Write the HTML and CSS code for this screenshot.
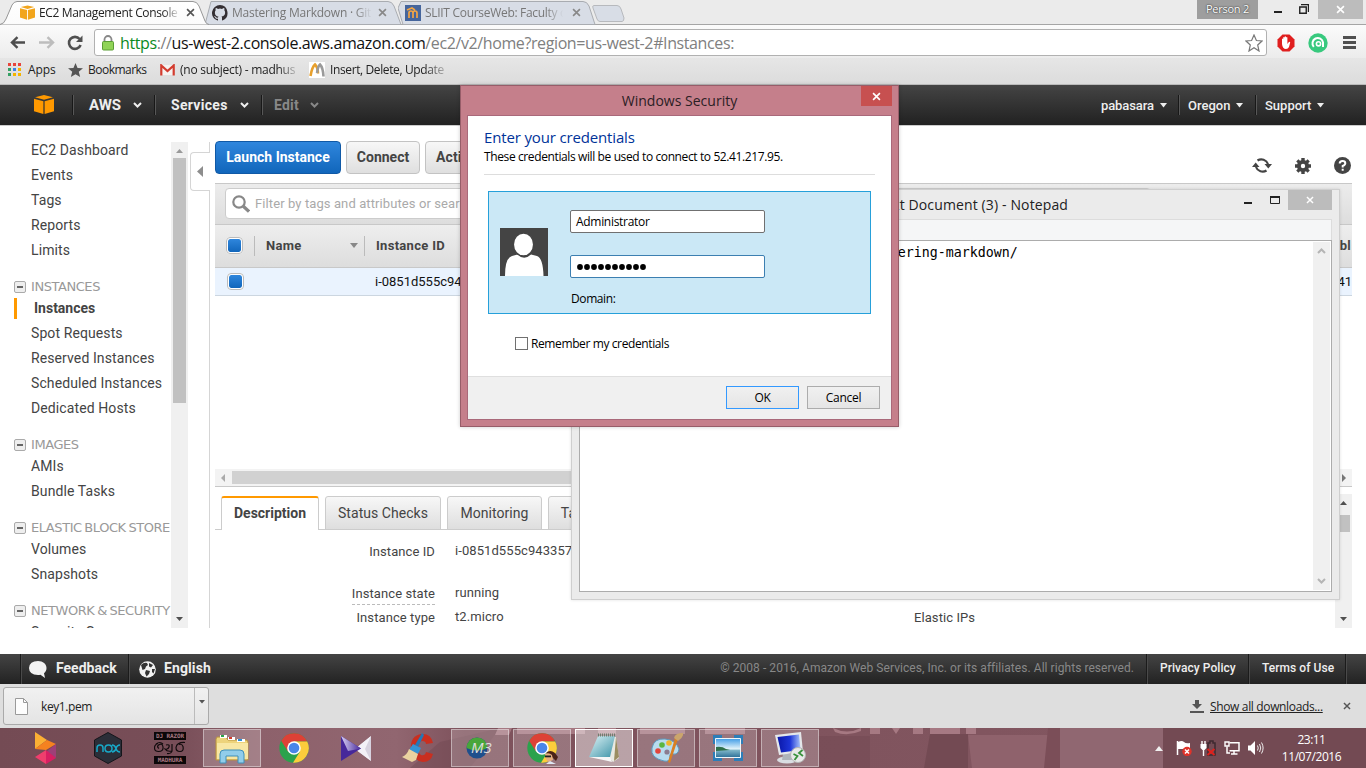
FILE: index.html
```html
<!DOCTYPE html>
<html lang="en">
<head>
<meta charset="utf-8">
<title>EC2 Management Console</title>
<link rel="stylesheet" href="styles.css">
</head>
<body>
<svg class="defs" width="0" height="0">
  <defs>
    <linearGradient id="gTab" x2="0" y2="1"><stop offset="0" stop-color="#fff"/><stop offset="1" stop-color="#fbfbfb"/></linearGradient>
    <linearGradient id="gPurple"><stop offset="0" stop-color="#d9d2f4"/><stop offset="1" stop-color="#46289a"/></linearGradient>
    <linearGradient id="gGlass" x2="1" y2="1"><stop offset="0" stop-color="#dff3f6"/><stop offset="1" stop-color="#3d94a8"/></linearGradient>
    <linearGradient id="gSky" x2="0" y2="1"><stop offset="0" stop-color="#3f9be6"/><stop offset=".55" stop-color="#e4f4fa"/><stop offset=".62" stop-color="#7fb5c8"/><stop offset="1" stop-color="#2c6f98"/></linearGradient>
    <linearGradient id="gScreen" x2="1" y2="0"><stop offset="0" stop-color="#0a17a8"/><stop offset=".55" stop-color="#1d35d8"/><stop offset="1" stop-color="#a9c4fa"/></linearGradient>
    <symbol id="cube" viewBox="0 0 20 19"><path d="M10 0 19 2.3 10 4.8 1 2.3zM0 3.8 9.4 6.3V19L0 16.2zM20 3.8 10.6 6.3V19L20 16.2z"/></symbol>
    <symbol id="chev" viewBox="0 0 9 6"><path d="M1 1 4.5 4.5 8 1" fill="none" stroke="currentColor" stroke-width="2"/></symbol>
    <symbol id="x" viewBox="0 0 10 10"><path d="M1.2 1.2 8.8 8.8M8.8 1.2 1.2 8.8" fill="none" stroke="currentColor" stroke-width="1.8"/></symbol>
    <symbol id="chrome" viewBox="0 0 30 30"><circle cx="15" cy="15" r="14.7" fill="#2ba24c"/><path d="M2.2 7.7A14.7 14.7 0 0 1 28.2 8.5H15L8.800 18.3z" fill="#dd4136"/><path d="M28.2 8.5A14.7 14.7 0 0 1 14 29.7L21 18.5 15 8.5z" fill="#fccd3c"/><circle cx="15" cy="15" r="6.8" fill="#fff"/><circle cx="15" cy="15" r="5.3" fill="#4a86e8"/></symbol>
  </defs>
</svg>

<div class="tabstrip">
  <div class="tab tab-active">
    <svg class="shape" width="209" height="25"><path d="M0 24.5Q4 24 6 19L12 5Q14 1.5 17 1.5H193Q197 1.5 199 6L205 21Q206.500 24.500 209 24.500V25H0z" fill="url(#gTab)" stroke="#979797"/></svg>
    <svg class="fav" width="15" height="15" fill="#f2a51c"><use href="#cube"/></svg>
    <span class="tab-title">EC2 Management Console</span>
    <svg class="tx dark" width="9" height="9"><use href="#x"/></svg>
  </div>
  <div class="tab tab-two">
    <svg class="shape" width="202" height="25"><path d="M6 1.500H183Q187 1.500 189 6L196 24.500H0z" fill="#d8dde6" stroke="#a9acb1"/></svg>
    <svg class="fav" width="16" height="16" viewBox="0 0 16 16"><path d="M8 0a8 8 0 0 0-2.500 15.600c.4 0 .5-.2.5-.4v-1.500c-2.200.5-2.700-1-2.700-1-.4-.9-.9-1.200-.9-1.200-.7-.5.1-.5.1-.5.800.1 1.200.8 1.200.8.700 1.300 1.900.9 2.300.7.100-.5.300-.9.500-1.100-1.800-.2-3.600-.9-3.600-4 0-.9.300-1.600.8-2.200-.1-.2-.4-1 .1-2.100 0 0 .7-.2 2.200.8a7.500 7.500 0 0 1 4 0c1.500-1 2.200-.8 2.200-.8.400 1.100.2 1.900.1 2.100.5.600.8 1.300.8 2.200 0 3.100-1.900 3.700-3.600 3.900.3.300.5.800.5 1.500v2.200c0 .2.100.5.500.4A8 8 0 0 0 8 0z" fill="#342f33"/></svg>
    <span class="tab-title">Mastering Markdown · Git</span>
    <svg class="tx" width="9" height="9"><use href="#x"/></svg>
  </div>
  <div class="tab tab-three">
    <svg class="shape" width="201" height="25"><path d="M3 1.500H185Q189 1.500 191 6L197 24.500H5L0 8z" fill="#d8dde6" stroke="#a9acb1"/></svg>
    <svg class="fav" width="16" height="16"><path d="M0 0h16v16H0z" fill="#45659c"/><path d="M4 13V8q0-2 2-2t2 2v5m0-5q0-2 2-2t2 2v5M2 5l5-2 3 2" stroke="#f2a443" stroke-width="1.700" fill="none"/></svg>
    <span class="tab-title">SLIIT CourseWeb: Faculty o</span>
    <svg class="tx" width="9" height="9"><use href="#x"/></svg>
  </div>
  <svg class="newtab" width="33" height="17"><path d="M2 .5H25Q28 .5 29 4L32 13Q32 16.500 30 16.500H8Q6 16.500 5 14L1 3Q0 .5 2 .5z" fill="#d8dde6" stroke="#b7b9bd"/></svg>
  <div class="winctl">
    <span class="person">Person 2</span>
    <svg class="wmin" width="8" height="2"><path d="M0 0h8v2H0z" fill="#222"/></svg>
    <svg class="wmax" width="10" height="10"><path d="M.75 3h6.500v6.200H.75z" fill="none" stroke="#222" stroke-width="1.400"/><path d="M2 .6h7.400V8" fill="none" stroke="#222" stroke-width="1.200"/></svg>
    <span class="wclose"><svg width="9" height="9"><use href="#x"/></svg></span>
  </div>
</div>

<div class="navbar">
  <svg class="nb-back" width="16" height="13" viewBox="0 0 16 13"><path d="M15 6.500H2.500M7.500 1.200 2 6.500l5.500 5.300" fill="none" stroke="#4e4e4e" stroke-width="2.400"/></svg>
  <svg class="nb-fwd" width="16" height="13" viewBox="0 0 16 13"><path d="M0 6.500h13.500M8.500 1.200 14 6.500l-5.500 5.300" fill="none" stroke="#bdbdbd" stroke-width="2.400"/></svg>
  <svg class="nb-rel" width="16" height="16" viewBox="0 0 16 16"><path d="M12.600 4A6 6 0 1 0 13.600 10" fill="none" stroke="#505050" stroke-width="2.600"/><path d="M15.500.5V7H9z" fill="#505050"/></svg>
  <div class="omnibox">
    <svg width="12" height="16" viewBox="0 0 12 16"><path d="M2.500 8V4.500a3.500 3.500 0 0 1 7 0V8" fill="none" stroke="#888" stroke-width="1.800"/><rect x=".5" y="6.500" width="11" height="8.500" rx="1" fill="#90d357" stroke="#5b9e35"/></svg>
    <span class="url"><i>https</i>://<b>us-west-2.console.aws.amazon.com</b>/ec2/v2/home?region=us-west-2#Instances:</span>
    <svg class="star" width="18" height="18" viewBox="0 0 18 18"><path d="M9 1 11.400 6.500 17 7 12.700 11 14 17 9 13.800 4 17 5.300 11 1 7 6.600 6.500z" fill="#fff" stroke="#777" stroke-width="1.200"/></svg>
  </div>
  <svg class="ext" width="18" height="18" viewBox="0 0 18 18"><path d="M5.500.5h7L17.500 5.500v7l-5 5h-7l-5-5v-7z" fill="#e01f1f"/><path d="M5 10V5q.6-1 1.200 0V8 3.500q.7-1 1.400 0V7.500 2.700q.7-1 1.400 0V7.500 3.500q.7-1 1.400 0V10l1.500-2q1-.5 1.300.2L12 13Q11 15 9 15 5.500 15 5 10z" fill="#fff"/></svg>
  <svg class="ext2" width="20" height="20" viewBox="0 0 20 20"><circle cx="10" cy="10" r="9.700" fill="#38c97e"/><path d="M5.800 13.800A5.300 5.300 0 1 1 15 9.500V14" fill="none" stroke="#fff" stroke-width="2"/><circle cx="10.500" cy="10.800" r="2.100" fill="none" stroke="#fff" stroke-width="1.600"/></svg>
  <svg class="burger" width="13" height="13"><path d="M0 1.500h13M0 6.500h13M0 11.500h13" stroke="#505050" stroke-width="2.800"/></svg>
</div>

<div class="bookmarks">
  <svg class="apps" width="13" height="13"><path d="M0 0h3v3H0zM5 0h3v3H5zM10 0h3v3h-3z" fill="#e8453c"/><path d="M0 5h3v3H0z" fill="#34a064"/><path d="M5 5h3v3H5z" fill="#3b82e8"/><path d="M10 5h3v3h-3z" fill="#f4b400"/><path d="M0 10h3v3H0z" fill="#34a064"/><path d="M5 10h3v3H5zM10 10h3v3h-3z" fill="#f4b400"/></svg>
  <span class="bm-a">Apps</span>
  <svg class="bmi" width="15" height="14" viewBox="0 0 16 15"><path d="M8 0 10.200 5.300 16 5.700 11.500 9.500 13 15 8 12 3 15 4.500 9.500 0 5.700 5.800 5.300z" fill="#555"/></svg>
  <span class="bm-b">Bookmarks</span>
  <svg class="bmi" width="15" height="12" viewBox="0 0 15 12"><path d="M2 1h11v10H2z" fill="#f6f2f0"/><path d="M1.300 11.500V1.500L7.500 7l6.200-5.500v10" fill="none" stroke="#d33c2f" stroke-width="2.200"/></svg>
  <span class="bm-c">(no subject) - madhus</span>
  <svg class="bmi" width="16" height="16"><path d="M0 0h16v16H0z" fill="#fff"/><path d="M1.500 14Q3 5 6 2.500q3 3 3 9" fill="none" stroke="#e8a02c" stroke-width="2.600"/><path d="M8 11Q9 4 11 2.500q3 3 3.500 12" fill="none" stroke="#9a9a9a" stroke-width="2.600"/></svg>
  <span class="bm-d">Insert, Delete, Update</span>
</div>

<div class="awsbar">
  <svg class="logo" width="20" height="19" fill="#f90"><use href="#cube"/></svg>
  <span class="aws-item i-aws"><span>AWS</span><svg width="9" height="6"><use href="#chev"/></svg></span>
  <span class="aws-item i-serv"><span>Services</span><svg width="9" height="6"><use href="#chev"/></svg></span>
  <span class="aws-item i-edit"><span>Edit</span><svg width="9" height="6"><use href="#chev"/></svg></span>
  <span class="aws-right">
    <span class="acct a1"><span>pabasara</span><svg width="7" height="5"><path d="M0 0h7L3.500 4.500z"/></svg></span>
    <span class="acct a2"><span>Oregon</span><svg width="7" height="5"><path d="M0 0h7L3.500 4.500z"/></svg></span>
    <span class="acct a3"><span>Support</span><svg width="7" height="5"><path d="M0 0h7L3.500 4.500z"/></svg></span>
  </span>
</div>

<div class="work">
  <nav class="side">
    <a>EC2 Dashboard</a><a>Events</a><a>Tags</a><a>Reports</a><a>Limits</a>
    <h4><i></i><span>INSTANCES</span></h4>
    <a class="cur">Instances</a><a>Spot Requests</a><a>Reserved Instances</a><a>Scheduled Instances</a><a>Dedicated Hosts</a>
    <h4><i></i><span>IMAGES</span></h4>
    <a>AMIs</a><a>Bundle Tasks</a>
    <h4><i></i><span>ELASTIC BLOCK STORE</span></h4>
    <a>Volumes</a><a>Snapshots</a>
    <h4><i></i><span>NETWORK &amp; SECURITY</span></h4>
    <a>Security Groups</a>
  </nav>
  <div class="vscroll"><svg width="7" height="4"><path d="M0 4h7L3.500 0z" fill="#999"/></svg><div class="vthumb"></div><svg width="7" height="4"><path d="M0 0h7L3.500 4z" fill="#505050"/></svg></div>
  <div class="split"><div class="handle"><svg width="6" height="11"><path d="M6 0v11L0 5.500z" fill="#8d8d8d"/></svg></div></div>
  <main class="main">
    <div class="actions">
      <span class="btn primary">Launch Instance</span><span class="btn b-con">Connect</span><span class="btn b-act">Actions</span>
      <span class="tools">
        <svg width="20" height="17" viewBox="0 0 20 17"><path d="M5.500 3.500A7 7 0 0 1 16 7M14.500 13.500A7 7 0 0 1 4 10" fill="none" stroke="#444" stroke-width="2.200"/><path d="M12.500 7H20l-3.700 4.500zM0 10h7.500L3.700 5.500z" fill="#444"/></svg>
        <svg width="16" height="16" viewBox="0 0 16 16"><path d="M6.300 0h3.400v2.200l1.300.5 1.600-1.500 2.200 2.200L13.300 5l.5 1.300H16v3.400h-2.200l-.5 1.300 1.500 1.600-2.200 2.200-1.600-1.500-1.300.5V16H6.300v-2.200L5 13.300l-1.600 1.500-2.200-2.200L2.700 11l-.5-1.300H0V6.300h2.200L2.700 5 1.200 3.400l2.200-2.200L5 2.700l1.300-.5zM8 5.800a2.200 2.200 0 1 0 0 4.400 2.200 2.200 0 0 0 0-4.400z" fill="#444"/></svg>
        <svg width="17" height="17" viewBox="0 0 17 17"><circle cx="8.500" cy="8.500" r="8.500" fill="#444"/><path d="M5.700 6.500Q5.700 4 8.500 4t2.800 2.300Q11.300 8 8.700 9v1.500M8.700 11.700v2" fill="none" stroke="#fff" stroke-width="2"/></svg>
      </span>
    </div>
    <div class="filter"><div class="search"><svg width="18" height="18" viewBox="0 0 18 18"><circle cx="7" cy="7" r="5.700" fill="none" stroke="#888" stroke-width="2.200"/><path d="M11 11l6 5.500" stroke="#888" stroke-width="3.200"/></svg><span>Filter by tags and attributes or search by keyword</span></div></div>
    <div class="thead"><i class="ck"></i><span class="th1"><span>Name</span><svg width="8" height="5"><path d="M0 0h8L4 5z" fill="#888"/></svg></span><span class="th2"><span>Instance ID</span></span><span class="thr">bl</span></div>
    <div class="trow"><i class="ck"></i><span class="iid">i-0851d555c943357</span><span class="tdr">41</span></div>
    <div class="blank"></div>
    <div class="hscroll"><svg width="5" height="8"><path d="M4 0v8L0 4z" fill="#aaa"/></svg><div class="hthumb"></div><svg width="5" height="8"><path d="M0 0v8l4-4z" fill="#777"/></svg></div>
    <div class="detail">
      <div class="dleft">
        <div class="dtabs"><span class="on">Description</span><span class="d2">Status Checks</span><span class="d3">Monitoring</span><span class="d4">Tags</span></div>
        <div class="kv"><span class="k">Instance ID</span><span class="v">i-0851d555c943357</span><span></span></div>
        <div class="kv kv2"><span class="k"><u>Instance state</u></span><span class="v">running</span><span></span></div>
        <div class="kv kv3"><span class="k">Instance type</span><span class="v">t2.micro</span><span class="eip">Elastic IPs</span></div>
      </div>
      <div class="vscroll vs2"><svg width="7" height="4"><path d="M0 4h7L3.500 0z" fill="#505050"/></svg><div class="vthumb"></div><svg width="7" height="4"><path d="M0 0h7L3.500 4z" fill="#505050"/></svg></div>
    </div>
  </main>
</div>

<footer class="foot">
  <span class="f1"><svg width="18" height="17" viewBox="0 0 18 17"><path d="M9 0C14 0 17.500 3 17.500 7c0 2.500-1 4-2.500 5.200L16 17l-4.500-3.200Q10 14 9 14 0 13.500 0 7 .5 0 9 0z" fill="#f2f2f2"/></svg><span>Feedback</span></span>
  <span class="f2"><svg width="17" height="17" viewBox="0 0 17 17"><circle cx="8.500" cy="8.500" r="8.300" fill="#f2f2f2"/><path d="M2 4Q5 1 8 2L9 4 7 5.500 6 8 3.500 9zM10 2l4 2-2 2.500-2-1zM7 9l4 1-1 3-2.500 2.500L6 12zM13 8l3 0-1.500 4.500L13 11z" fill="#333"/></svg><span>English</span></span>
  <span class="copy">© 2008 - 2016, Amazon Web Services, Inc. or its affiliates. All rights reserved.</span>
  <span class="f3">Privacy Policy</span><span class="f4">Terms of Use</span><span class="f5"></span>
</footer>

<div class="dl">
  <div class="dlitem"><svg width="13" height="17"><path d="M.5.500h8l4 4v12H.5z" fill="#fdfdfd" stroke="#9a9a9a"/><path d="M8.500.500v4h4" fill="none" stroke="#9a9a9a"/></svg><span class="fn">key1.pem</span><span class="dd"><svg width="6" height="4"><path d="M0 0h6L3 3.500z" fill="#555"/></svg></span></div>
  <svg class="dlarrow" width="14" height="13"><path d="M5 0h4v4h3L7 9 2 4h3zM0 11h14v2H0z" fill="#555"/></svg>
  <span class="all">Show all downloads...</span>
  <svg class="dlx" width="8" height="8"><use href="#x"/></svg>
</div>

<div class="taskbar">
  <svg class="wall" width="1366" height="40"><defs><linearGradient id="gw"><stop offset="0" stop-color="#744b54"/><stop offset=".13" stop-color="#784e58"/><stop offset=".19" stop-color="#8d616b"/><stop offset=".29" stop-color="#916670"/><stop offset=".34" stop-color="#7e525c"/><stop offset=".62" stop-color="#80545e"/><stop offset="1" stop-color="#845862"/></linearGradient></defs>
    <path d="M0 0h1366v40H0z" fill="url(#gw)"/>
    <path d="M818 8h52v32h-52zM440 14l60-14-30 40h-60z" fill="#6f4650" opacity=".4"/><path d="M930 6h38v34h-44z" fill="#734a53"/>
    <g fill="#b3858f" opacity=".75"><path d="M498 0h14l-3 7h-14zM517 0h68v6h-68zM598 0h18v6h-18zM640 0h45v6h-45zM705 0h40v6h-40zM833 0q14 7 28 0v3q-14 6-26 1zM870 0h10v6h-10zM892 0h8l-4 6zM913 0h10v6h-10zM930 0h30v6h-30zM966 0h10v6h-10z"/></g>
    <path d="M968 7h80v33h-76z" fill="#8f626c"/><path d="M1048 0h12v40h-16z" fill="#7b4e58"/><path d="M1060 0h103v40h-103z" fill="#906771"/><path d="M1163 0h203v40h-203z" fill="#734a53"/></svg>
  <span class="tk"><svg width="24" height="32" viewBox="0 0 24 32"><path d="M1 0 13 8 1 17z" fill="#fbb034"/><path d="M13 8 22 12 12 18 1 17z" fill="#f58220"/><path d="M22 12V26L12 20z" fill="#9e3f78"/><path d="M12 18 22 26 12 32z" fill="#d81f62"/><path d="M1 25 12 18V32z" fill="#ef3e6d"/></svg></span>
  <span class="tk"><svg width="28" height="32" viewBox="0 0 28 32"><path d="M14 .5 27.500 8v16L14 31.500.5 24V8z" fill="#2b2e38" stroke="#15161b"/><path d="M3 20v-4q0-3 3-3t3 3v4M11 16.500q0-3.500 3.500-3.500t3.500 3.500-3.500 3.500-3.500-3.500zM18 13q3 0 4 3.500t4 3.500M26 13q-3 0-4 3.500T18 20" fill="none" stroke="#18a9c8" stroke-width="1.500"/></svg></span>
  <span class="tk dj"><b>DJ RAZOR</b><svg width="32" height="14" viewBox="0 0 32 14"><path d="M4 2.500q-3.500 1-3.500 4.500t4 3.500q5 0 4.500-4.500T4.500 4q-2 2 .5 3.500M2 3q4-3 7 0M12 4q4-1 3 2t-4 2q2 3 7 2V3M18 9q0 4-5 3.500M31 1.500q-8-.5-9 5 0 4 4 4t3-5q-1-3-4-2" fill="none" stroke="#120b0d" stroke-width="1.200"/></svg><b>MADHURA</b></span>
  <span class="tk open"><svg width="34" height="31" viewBox="0 0 34 31"><path d="M2 4h9l2 3h18q2 0 2 2v18H1V6z" fill="#edd37b" stroke="#b8923f"/><path d="M5 2h7v3H5zM13 4h7v3h-7zM22 6h8v3h-8z" fill="#fff"/><path d="M6 2h3v2H6z" fill="#2aa34a"/><path d="M14 4h3v2h-3z" fill="#d43b2c"/><path d="M23 6h4v2h-4z" fill="#2c8fd8"/><path d="M2 10h31v16H2z" fill="#f8e7a4"/><path d="M5 30V21q0-4 4-4h16q4 0 4 4v9h-6v-7H11v7z" fill="#91cdea" stroke="#3f8fb8"/></svg></span>
  <span class="tk"><svg width="30" height="30"><use href="#chrome"/></svg></span>
  <span class="tk"><svg width="32" height="27" viewBox="0 0 32 27"><path d="M31 1v25L15 14z" fill="#d7d2df"/><path d="M31 1 15 14 31 26 25 14z" fill="#f3f1f7"/><path d="M1 1 21 13.500 1 26z" fill="#46289a"/><path d="M1 1 21 13.500 8 16z" fill="url(#gPurple)"/></svg></span>
  <span class="tk"><svg width="32" height="32" viewBox="0 0 32 32"><path d="M31 11Q29 1 19 2 8 4 9 17q2 12 12 13 8 0 10-8l-7-2q-1 4-5 3-3-2-3-8 1-6 4-6 4 0 4 3z" fill="#c92f20"/><path d="M20 1l2 2-6 12-3-2z" fill="#2478b6"/><path d="M11 12l8 4-3 6-9-4z" fill="#3493d4"/><path d="M7 17l9 5-2 6-4 2-10-5q5-2 7-8z" fill="#ead2a0"/></svg></span>
  <span class="tk open m3"><svg width="22" height="22" viewBox="0 0 22 22"><circle cx="11" cy="11" r="10.500" fill="#1f4f8c"/><path d="M.5 11a10.500 10.500 0 0 1 21 0q-10 5-21 0z" fill="#48a63a"/></svg><b>M3</b></span>
  <span class="tk open"><svg width="30" height="30"><use href="#chrome"/></svg><svg class="badge" width="14" height="14" viewBox="0 0 14 14"><path d="M2 3Q6-1 11 3L14 7 12 11 9 8z" fill="#4a2218"/><path d="M1 4q4-2 7 1l1 5-5 2-2-3z" fill="#e6ae80"/><path d="M1 5.500h6v1.800H1z" fill="#222"/><path d="M2 14l4-3 6 3z" fill="#dfe6f2"/></svg></span>
  <span class="tk open focus"><svg width="32" height="30" viewBox="0 0 32 30"><path d="M11 3 28 4 31 25 25 29 22 26z" fill="#e9e9e2"/><path d="M28 4l3 20-5 4z" fill="#9b8d62"/><path d="M10 3h17l-5 21H1z" fill="url(#gGlass)"/><path d="M1 24h21l2 5-4-1z" fill="#f6f6f6"/><path d="M10 2h18" stroke="#6e7d6e" stroke-width="3" stroke-dasharray="1 1"/></svg></span>
  <span class="tk open"><svg width="33" height="32" viewBox="0 0 33 32"><path d="M2 16Q4 6 15 7t14 10q-1 6-6 5-4-1-3 3 0 5-6 4Q0 26 2 16z" fill="#b8dcee" stroke="#5d9bbf"/><circle cx="8" cy="19" r="2.800" fill="#e2463c"/><circle cx="12" cy="13" r="2.800" fill="#5ab640"/><circle cx="19" cy="11" r="2.800" fill="#f1b52c"/><circle cx="17" cy="20" r="2.600" fill="#8a7d8f"/><path d="M28 7 20 31l-2-1 7-24z" fill="#d98024"/><path d="M24 6Q25 1 33 1q1 4-5 8z" fill="#cba56c"/></svg></span>
  <span class="tk open"><svg width="30" height="26" viewBox="0 0 30 26"><path d="M0 0h9v4H4v5H0zM21 0h9v9h-4V4h-5zM0 17h4v5h5v4H0zM26 17h4v9h-9v-4h5z" fill="#2d7db8"/><path d="M2.500 3.500h25v19h-25z" fill="url(#gSky)" stroke="#eef6fa"/><path d="M3 12q6-1 10 2l4 1-14 1z" fill="#2f6f4a"/></svg></span>
  <span class="tk open"><svg width="32" height="32" viewBox="0 0 32 32"><ellipse cx="13" cy="28" rx="10" ry="3.500" fill="#d9dde2"/><path d="M9 22h8l1 6H8z" fill="#aeb4bb"/><path d="M1 3 27 0 29 20 5 23z" fill="#e4e7ea"/><path d="M3.500 5 25 2.500 26.500 18 7 20.500z" fill="url(#gScreen)"/><circle cx="24" cy="23" r="7.500" fill="#e8e8e8" stroke="#b5b5b5"/><path d="M19.500 22l4 2-3 4M28.500 18l-3.500 3 4 3" fill="none" stroke="#38913b" stroke-width="1.800"/></svg></span>
  <div class="tray">
    <svg class="up" width="8" height="5"><path d="M0 5h8L4 0z" fill="#f0f0f0"/></svg>
    <svg width="16" height="16" viewBox="0 0 16 16"><path d="M1.500 1v14" stroke="#fff" stroke-width="1.500"/><path d="M2 2q4-2 6 0t6 1v6H2z" fill="#fff"/><circle cx="11" cy="11.500" r="4.700" fill="#e0332a"/><path d="M9 9.500l4 4m0-4-4 4" stroke="#fff" stroke-width="1.500"/></svg>
    <svg width="16" height="16" viewBox="0 0 16 16"><path d="M2 1v4M5 1v4M3.500 9v7" stroke="#fff" stroke-width="1.400"/><path d="M.5 4h6v4l-2 2h-2L.5 8z" fill="#fff"/><path d="M8 15V3h2V1h3v2h2v12z" fill="none" stroke="#3f2a30" stroke-width="1.500"/><path d="M7.500 9l7 6m0-6-7 6" stroke="#e0201c" stroke-width="2"/></svg>
    <svg width="16" height="14" viewBox="0 0 16 14"><path d="M5.500 1.800h9.500v8H5.500M10 10v3M7 13h6.500M3 5.500V12h3" fill="none" stroke="#fff" stroke-width="1.500"/><path d="M1 1h4v4H1z" fill="none" stroke="#fff" stroke-width="1.400"/></svg>
    <svg width="16" height="14" viewBox="0 0 16 14"><path d="M0 4.500h2.500L7 0v14L2.500 9.500H0z" fill="#fff"/><path d="M9.500 4.500q1.500 2.500 0 5M11.500 3q2.500 4 0 8M13.500 1.500q3.200 5.500 0 11" fill="none" stroke="#eee"/></svg>
    <div class="clock"><span>23:11</span><span class="date">11/07/2016</span></div>
  </div>
</div>

<section class="notepad">
  <div class="np-title"><span class="np-name">New Text Document (3) - Notepad</span>
    <span class="np-ctl"><svg class="n1" width="8" height="2"><path d="M0 0h8v2H0z" fill="#222"/></svg><svg class="n2" width="10" height="8"><path d="M.5 1h9v6.500h-9z" fill="none" stroke="#222"/><path d="M0 0h10v2H0z" fill="#222"/></svg><span class="n3"><svg width="8" height="8"><use href="#x"/></svg></span></span>
  </div>
  <div class="np-menu"></div>
  <div class="np-area"><span class="np-text">https://guides.github.com/features/mastering-markdown/</span>
    <div class="np-scroll"><svg width="9" height="6"><path d="M1 5l3.500-3.500L8 5" fill="none" stroke="#b5b5b5" stroke-width="2"/></svg><svg width="9" height="6"><use href="#chev"/></svg></div></div>
</section>

<section class="dialog">
  <div class="dg-title"><span>Windows Security</span><i><svg width="9" height="9"><use href="#x"/></svg></i></div>
  <div class="dg-body">
    <div class="dg-main">
      <h2><span>Enter your credentials</span></h2>
      <p class="sub"><span>These credentials will be used to connect to 52.41.217.95.</span></p>
      <div class="cred">
        <svg width="48" height="48"><path d="M0 0h48v48H0z" fill="#444"/><path d="M5 48Q5 30 12 28L17.500 26.500Q24 33 31 26.500L37 28Q43 30 43.500 48z" fill="#fff"/><ellipse cx="23.500" cy="16.500" rx="10.200" ry="11.500" fill="#fff" stroke="#444" stroke-width="1.500"/></svg>
        <div class="fields"><div class="inp"><span>Administrator</span></div><div class="inp pw"><svg width="72" height="8"><g><circle cx="4" cy="4" r="2.900"/><circle cx="11" cy="4" r="2.900"/><circle cx="18" cy="4" r="2.900"/><circle cx="25" cy="4" r="2.900"/><circle cx="32" cy="4" r="2.900"/><circle cx="39" cy="4" r="2.900"/><circle cx="46" cy="4" r="2.900"/><circle cx="53" cy="4" r="2.900"/><circle cx="60" cy="4" r="2.900"/><circle cx="67" cy="4" r="2.900"/></g></svg></div><span class="dom">Domain:</span></div>
      </div>
      <label class="rem"><i></i><span>Remember my credentials</span></label>
    </div>
    <div class="dg-foot"><span class="wb ok">OK</span><span class="wb">Cancel</span></div>
  </div>
</section>
</body>
</html>
```
FILE: styles.css
```css
* { box-sizing: border-box; }
body { margin: 0; width: 1366px; height: 768px; overflow: hidden; position: relative; display: flex; flex-direction: column; background: #fff; font: 12px "Open Sans", sans-serif; white-space: nowrap; }
svg { display: block; flex: none; }
.defs { position: absolute; }
i { font-style: normal; }

.tabstrip { height: 25px; flex: none; display: flex; background: #ebebeb; border-bottom: 1px solid #a5a5a5; }
.tab { position: relative; display: flex; align-items: center; height: 25px; flex: none; color: #777; }
.shape { position: absolute; left: 0; top: 0; }
.fav { position: relative; }
.tab-active { width: 205px; padding-left: 20px; color: #222; z-index: 3; }
.tab-two { width: 193px; padding-left: 7px; z-index: 2; }
.tab-three { width: 194px; padding-left: 7px; }
.tab-title { position: relative; margin-left: 4px; width: 144px; letter-spacing: -.36px; line-height: 25px; -webkit-mask-image: linear-gradient(90deg, #000 86%, transparent 98%); }
.tab-two .tab-title { width: 143px; letter-spacing: -.22px; }
.tab-three .tab-title { letter-spacing: -.3px; -webkit-mask-image: linear-gradient(90deg, #000 84%, transparent 96%); }
.tx { position: relative; margin-left: 3px; color: #888; }
.tx.dark { color: #555; }
.newtab { margin-top: 5px; }
.winctl { margin-left: auto; display: flex; height: 19px; width: 169px; }
.person { width: 61px; background: #9e9e9e; color: #fff; font-size: 11px; line-height: 18px; text-align: center; letter-spacing: -.25px; text-shadow: 0 0 2px #333, 0 0 1px #555; }
.wmin { margin: 11px 0 0 16px; }
.wmax { margin: 4px 0 0 17px; }
.wclose { margin-left: 9px; width: 45px; background: #bcbcbc; color: #fff; display: flex; align-items: center; justify-content: center; }

.navbar { height: 33px; flex: none; display: flex; align-items: center; background: linear-gradient(#fbfbfb, #ececec); padding: 2px 0 0 10px; }
.nb-fwd { margin-left: 13px; }
.nb-rel { margin-left: 12px; }
.omnibox { margin-left: 11px; width: 1173px; height: 27px; background: #fff; border: 1px solid #b1b1b1; border-radius: 3px; display: flex; align-items: center; padding: 0 3px 0 7px; flex: none; }
.url { margin-left: 6px; font-size: 16px; letter-spacing: -.39px; color: #808080; }
.url i { color: #0b8a1e; }
.url b { font-weight: 400; color: #111; }
.star { margin-left: auto; }
.ext { margin-left: 10px; }
.ext2 { margin-left: 13px; }
.burger { margin-left: 15px; }

.bookmarks { height: 27px; flex: none; display: flex; align-items: center; background: linear-gradient(#e6e6e6, #dcdcdc); border-bottom: 1px solid #bababa; color: #222; padding: 0 0 3px 8px; }
.bm-a { margin-left: 7px; width: 40px; letter-spacing: -.1px; }
.bm-b { margin-left: 5px; width: 72px; letter-spacing: -.5px; letter-spacing: -.52px; }
.bm-c { margin-left: 5px; width: 117px; margin-right: 12px; letter-spacing: -.26px; -webkit-mask-image: linear-gradient(90deg, #000 84%, transparent 103%); }
.bm-d { margin-left: 5px; width: 118px; letter-spacing: -.38px; -webkit-mask-image: linear-gradient(90deg, #000 80%, transparent 103%); }
.bookmarks .bmi { flex: none; }

.awsbar { height: 40px; flex: none; display: flex; align-items: center; background: linear-gradient(#444, #222); padding-left: 34px; font: 700 15px Roboto, sans-serif; color: #eee; border-bottom: 1px solid #222; }
.aws-item { display: flex; align-items: center; height: 20px; border-left: 1px solid #575757; box-shadow: -1px 0 #181818; }
.i-aws { margin-left: 19px; width: 82px; padding-left: 15px; }
.i-serv { width: 107px; padding-left: 15px; font-size: 14px; letter-spacing: .3px; }
.i-edit { padding-left: 11px; color: #888; font-size: 14px; letter-spacing: .2px; }
.i-aws svg { margin-left: 12px; }
.i-serv svg { margin-left: 12px; }
.i-edit svg { margin-left: 11px; }
.aws-right { margin-left: auto; display: flex; width: 278px; font: 500 13px Roboto, sans-serif; padding-top: 1px; }
.acct { height: 20px; display: flex; align-items: center; fill: #eee; }
.acct svg { margin-left: 6px; }
.a1 { width: 91px; padding-left: 13px; letter-spacing: -.1px; }
.a2, .a3 { border-left: 1px solid #575757; box-shadow: -1px 0 #181818; padding-left: 8px; }
.a2 { width: 77px; }

.work { height: 529px; flex: none; display: flex; border-top: 1px solid #ccc; font-family: Roboto, sans-serif; color: #444; }
.side { width: 171px; height: 502px; overflow: hidden; padding-top: 12px; font-size: 14px; }
.side a { display: block; height: 25px; line-height: 25px; padding-left: 31px; letter-spacing: .1px; }
.side h4 { margin: 15px 0 0; height: 18px; display: flex; align-items: center; padding: 0 0 1px 14px; font: 13px "DejaVu Sans", sans-serif; letter-spacing: -.44px; word-spacing: -1px; color: #999; }
.side h4 i { width: 12px; height: 12px; border: 1px solid #aaa; border-radius: 2px; background: linear-gradient(#666, #666) 2px 4px/6px 2px no-repeat, #eee; margin-right: 5px; flex: none; }
.side a.cur { font-weight: 700; padding-left: 17px; margin-left: 14px; border-left: 3px solid #f90; height: 21px; line-height: 21px; margin-top: 2px; margin-bottom: 2px; letter-spacing: 0; }
.vscroll { width: 17px; margin-top: 16px; height: 486px; background: #f0f0f0; display: flex; flex-direction: column; align-items: center; padding: 7px 0 7px; flex: none; }
.vthumb { width: 13px; height: 245px; background: #c1c1c1; margin-top: 5px; }
.vscroll svg:last-child { margin-top: auto; }
.split { width: 22px; margin-top: 16px; height: 486px; background: linear-gradient(#d5d5d5, #d5d5d5) 100% 0/1px 100% no-repeat; padding: 10px 0 0 2px; }
.handle { width: 20px; height: 39px; background: #fff; border: 1px solid #d5d5d5; border-right: 0; border-radius: 4px 0 0 4px; display: flex; align-items: center; padding-left: 6px; }

.main { margin-left: 5px; width: 1137px; height: 502px; overflow: hidden; }
.actions { height: 57px; padding-top: 15px; display: flex; gap: 5px; }
.btn { height: 33px; border: 1px solid #c3c3c3; border-radius: 4px; background: linear-gradient(#f7f7f7, #dfdfdf); font: 700 14px/31px Roboto, sans-serif; text-align: center; width: 74px; }
.b-act { text-align: left; padding-left: 10px; letter-spacing: .1px; }
.primary { width: 126px; background: linear-gradient(#2f86dd, #1166bb); color: #fff; border-color: #1059a6; }
.tools { margin-left: auto; display: flex; align-items: center; gap: 23px; height: 49px; padding-right: 1px; }
.filter { height: 41px; border-top: 1px solid #c8c8c8; background: linear-gradient(#ececec, #ddd); padding: 4px 0 0 10px; }
.search { width: 926px; height: 31px; background: #fff; border: 1px solid #ccc; border-radius: 4px; display: flex; align-items: center; padding-left: 6px; font-size: 13px; color: #aaa; letter-spacing: .1px; }
.search span { margin-left: 5px; }
.thead { height: 44px; border-top: 1px solid #c8c8c8; border-bottom: 1px solid #c8c8c8; background: linear-gradient(#eee, #ddd); display: flex; align-items: center; font: 700 13px Roboto, sans-serif; padding: 0 0 1px 11px; letter-spacing: .3px; }
.ck { width: 17px; height: 17px; border: 2px solid #fff; outline: 1px solid #bbb; outline-offset: -1px; border-radius: 4px; background: linear-gradient(#2f86dd, #1166bb) padding-box; }
.th1 { margin-left: 11px; width: 110px; height: 20px; display: flex; align-items: center; justify-content: space-between; padding: 0 6px 0 11px; border-left: 1px solid #bbb; flex: none; }
.th2 { border-left: 1px solid #bbb; padding-left: 11px; height: 20px; line-height: 20px; flex: none; }
.thr { margin-left: auto; margin-right: 1px; }
.trow { height: 28px; background: #eaf3fe; border-bottom: 1px solid #ccd6e0; display: flex; align-items: center; padding-left: 12px; color: #111; font-size: 13px; }
.iid { margin-left: 131px; }
.tdr { margin-left: auto; }
.blank { height: 173px; }
.hscroll { height: 18px; background: #f3f3f3; border-bottom: 1px solid #c8c8c8; display: flex; align-items: center; padding: 0 5px 0 6px; }
.hthumb { height: 13px; width: 1000px; background: #d1d1d1; margin: 0 auto 0 6px; }
.detail { display: flex; padding-top: 7px; }
.dleft { flex: 1; }
.dtabs { display: flex; height: 36px; padding: 2px 0 0 6px; gap: 6px; background: linear-gradient(#ccc, #ccc) 0 100%/100% 1px no-repeat; font-size: 14px; }
.dtabs span { border: 1px solid #ccc; border-radius: 3px 3px 0 0; background: linear-gradient(#f7f7f7, #dedede); text-align: center; line-height: 32px; width: 116px; height: 34px; letter-spacing: .05px; }
.dtabs .on { width: 98px; border-top: 2px solid #f90; border-bottom: 0; background: #fff; font-weight: 700; line-height: 30px; letter-spacing: 0; }
.dtabs .d3 { width: 95px; }
.dtabs .d4 { width: 56px; }
.kv { display: grid; grid-template-columns: 220px 439px auto; column-gap: 20px; font-size: 13px; margin-top: 11px; line-height: 20px; height: 20px; letter-spacing: .08px; }
.kv .k { text-align: right; padding-top: 1px; }
.kv .eip { padding-top: 1px; }
.kv u { text-decoration: none; display: inline-block; border-bottom: 1px dashed #bbb; height: 21px; }
.kv2 { margin-top: 22px; }
.kv3 { margin-top: 4px; }
.vs2 { margin-top: 0; height: 134px; padding-top: 7px; }
.vs2 .vthumb { height: 17px; margin-top: 10px; }

.foot { height: 30px; flex: none; display: flex; align-items: center; background: linear-gradient(#444, #222); padding-left: 21px; font: 700 14px/28px Roboto, sans-serif; color: #eee; }
.foot > span { height: 30px; display: flex; align-items: center; border-left: 1px solid #4a4a4a; box-shadow: -1px 0 #1b1b1b; padding-bottom: 2px; }
.foot .f1 svg, .foot .f2 svg { margin-top: 2px; }
.foot .f1 { width: 108px; padding-left: 7px; gap: 9px; }
.foot .f2 { width: 93px; padding-left: 9px; gap: 8px; letter-spacing: .1px; }
.foot .copy { width: 925px; justify-content: flex-end; padding-right: 13px; font-weight: 400; font-size: 12px; color: #888; letter-spacing: .055px; box-shadow: none; border-left: 0; }
.foot .f3 { width: 102px; padding-left: 12px; font-size: 12px; font-weight: 500; letter-spacing: .05px; }
.foot .f4 { width: 97px; padding-left: 12px; font-size: 12px; font-weight: 500; letter-spacing: .05px; }

.dl { height: 44px; flex: none; display: flex; align-items: center; background: #dedede; padding-left: 3px; color: #222; }
.dlitem { width: 206px; height: 38px; border: 1px solid #aaa; border-radius: 3px; background: linear-gradient(#f1f1f1, #e4e4e4); display: flex; align-items: center; padding-left: 11px; }
.fn { margin-left: 13px; letter-spacing: -.4px; }
.dd { margin-left: auto; width: 14px; height: 36px; border-left: 1px solid #bbb; padding: 12px 0 0 4px; }
.dlarrow { margin-left: 981px; }
.all { margin-left: 6px; text-decoration: underline; width: 113px; letter-spacing: -.35px; }
.dlx { margin-left: 20px; color: #555; }

.taskbar { height: 40px; flex: none; position: relative; display: flex; gap: 4px; padding: 1px 0 1px 17px; align-items: stretch; }
.wall { position: absolute; left: 0; top: 0; }
.tk { position: relative; width: 58px; height: 38px; display: flex; align-items: center; justify-content: center; flex: none; }
.open { border: 1px solid rgba(255,255,255,.42); background: rgba(255,255,255,.2); }
.focus { border-color: #fff; background: rgba(255,255,255,.46); }
.dj { flex-direction: column; gap: 1px; }
.dj b { background: #0c0708; color: #a87882; font: 700 6px/8px "DejaVu Sans Mono", monospace; width: 32px; text-align: center; letter-spacing: -.1px; }
.m3 svg { margin-right: 6px; }
.m3 b { position: absolute; left: 19px; top: 7px; font: italic 15px "Open Sans", sans-serif; color: #ddd; }
.badge { position: absolute; left: 30px; top: 20px; }
.tray { position: relative; margin-left: auto; width: 211px; display: flex; align-items: center; gap: 8px; color: #fff; }
.up { margin-right: 5px; }
.clock { margin-left: 2px; flex: 1; margin-right: 17px; display: flex; flex-direction: column; align-items: center; line-height: 17px; letter-spacing: -.55px; }
.date { letter-spacing: -.42px; }

.notepad { position: absolute; left: 571px; top: 189px; width: 769px; height: 411px; background: #ebebeb; border: 1px solid #cfcfcf; padding: 0 7px 7px; z-index: 4; box-shadow: 0 0 3px rgba(0,0,0,.12); }
.np-title { height: 29px; display: flex; justify-content: center; position: relative; color: #222; }
.np-name { font-size: 14px; line-height: 30px; letter-spacing: .13px; }
.np-ctl { position: absolute; right: 0; top: 0; display: flex; }
.n1 { margin: 12px 18px 0 0; }
.n2 { margin: 6px 8px 0 0; }
.n3 { width: 44px; height: 20px; background: #bcbcbc; color: #fff; display: flex; align-items: center; justify-content: center; }
.np-menu { height: 21px; background: #f5f6f7; border: 1px solid #dcdcdc; border-bottom: 0; }
.np-area { height: 352px; border: 1px solid #acacac; background: #fff; padding: 1px; display: flex; justify-content: space-between; }
.np-text { font: 13.29px/22px "DejaVu Sans Mono", monospace; color: #000; padding-left: 5px; }
.np-scroll { width: 17px; background: #f0f0f0; display: flex; flex-direction: column; justify-content: space-between; padding: 6px 4px; color: #b5b5b5; }

.dialog { position: absolute; left: 460px; top: 85px; width: 439px; height: 342px; background: #c57f8b; border: 1px solid #975d69; z-index: 5; color: #000; box-shadow: 0 0 4px rgba(0,0,0,.2); }
.dg-title { height: 29px; position: relative; text-align: center; font-size: 14px; line-height: 29px; color: #2b2024; letter-spacing: .02px; }
.dg-title i { position: absolute; right: 6px; top: 0; width: 31px; height: 20px; background: #c75050; color: #fff; display: flex; align-items: center; justify-content: center; }
.dg-body { margin: 0 6px; height: 305px; border: 1px solid #a9697a; background: #fff; display: flex; flex-direction: column; }
.dg-main { height: 260px; padding: 10px 16px 0; }
.dg-main h2 { margin: 0; font-size: 15px; font-weight: 400; line-height: 22px; color: #003399; letter-spacing: -.15px; }
.sub { margin: 0; line-height: 17px; height: 27px; border-bottom: 1px solid #ddd; letter-spacing: -.385px; }
.cred { margin: 16px 4px 0; height: 123px; border: 1px solid #26a0da; background: #cbe8f6; display: flex; padding-left: 11px; }
.cred > svg { margin-top: 36px; }
.fields { margin-left: 22px; padding-top: 18px; }
.inp { width: 195px; height: 23px; background: #fff; border: 1px solid #707070; border-radius: 2px; padding-left: 5px; line-height: 21px; display: flex; align-items: center; letter-spacing: -.3px; }
.pw { margin-top: 22px; border-color: #3c7fb1; }
.dom { display: block; margin: 12px 0 0 1px; line-height: 18px; letter-spacing: -.4px; }
.rem { display: flex; align-items: center; margin: 20px 0 0 31px; height: 18px; letter-spacing: -.39px; }
.rem i { width: 13px; height: 13px; border: 1px solid #707070; margin-right: 3px; }
.dg-foot { flex: 1; background: #f0f0f0; border-top: 1px solid #dfdfdf; display: flex; justify-content: flex-end; gap: 8px; padding: 9px 11px 0; }
.wb { width: 73px; height: 23px; border: 1px solid #acacac; background: linear-gradient(#f0f0f0, #e5e5e5); text-align: center; line-height: 21px; letter-spacing: -.3px; }
.ok { border-color: #3399ff; }
```
